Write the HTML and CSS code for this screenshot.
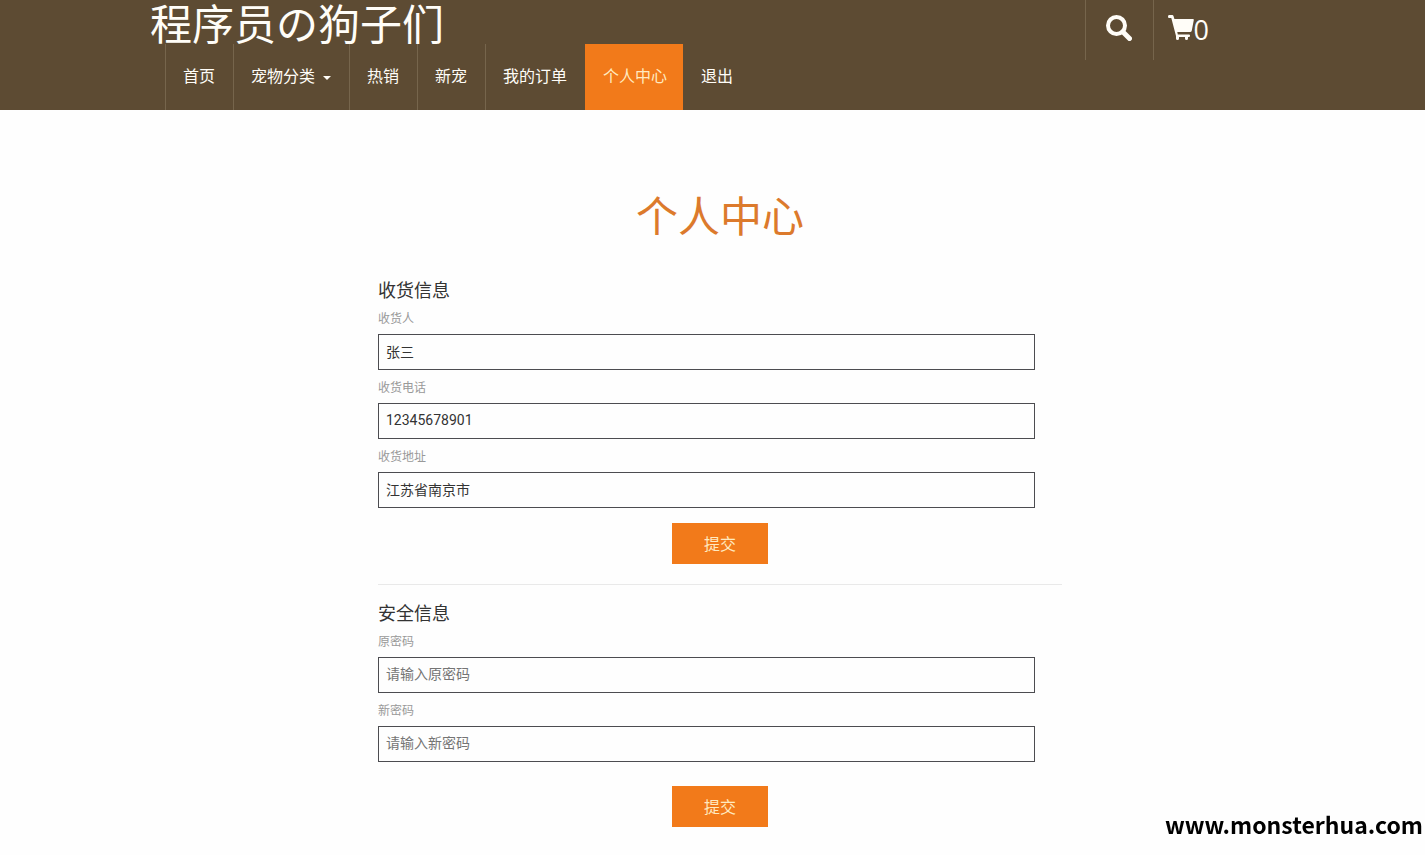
FILE: index.html
```html
<!DOCTYPE html>
<html lang="zh-CN">
<head>
<meta charset="utf-8">
<meta name="viewport" content="width=device-width, initial-scale=1">
<title>个人中心</title>
<link rel="stylesheet" href="styles.css">
</head>
<body>
<header class="header">
  <div class="container header-row">
    <div class="header-main">
      <a class="brand" href="#">程序员の狗子们</a>
      <nav class="nav">
        <a href="#">首页</a>
        <a href="#">宠物分类<span class="caret"></span></a>
        <a href="#">热销</a>
        <a href="#">新宠</a>
        <a href="#">我的订单</a>
        <a class="active" href="#">个人中心</a>
        <a class="plain" href="#">退出</a>
      </nav>
    </div>
    <div class="tools">
      <button class="search" type="button" aria-label="搜索">
        <svg width="26" height="26" viewBox="0 0 26 26"><circle cx="10.500" cy="10.500" r="8.500" fill="none" stroke="#fffdf8" stroke-width="4"/><path d="M17 17l6.500 6.500" stroke="#fffdf8" stroke-width="5" stroke-linecap="round"/></svg>
      </button>
      <a class="cart" href="#" aria-label="购物车">
        <svg width="26" height="26" viewBox="0 0 26 26" fill="#fffdf8"><path d="M1 0h3.200q1 0 1.300 1l.9 3H25q1 0 .8 1l-2 10.500q-.3 1.500-1.800 1.500H9.300l.5 2.500H21q1 0 1 1v.5q0 1-1 1h-1v1.500q0 1.500-1.500 1.500T17 23.500V22h-6v1.500Q11 25 9.500 25T8 23.500V21L3.300 3H1Q0 3 0 1.500T1 0z"/></svg><span>0</span>
      </a>
    </div>
  </div>
</header>
<main class="container">
  <h1>个人中心</h1>
  <div class="panel">
    <form class="section">
      <h2>收货信息</h2>
      <label for="name">收货人</label>
      <input id="name" type="text" value="张三">
      <label for="phone">收货电话</label>
      <input id="phone" type="text" value="12345678901">
      <label for="address">收货地址</label>
      <input id="address" type="text" value="江苏省南京市">
      <button class="submit" type="button">提交</button>
    </form>
    <form class="section security">
      <h2>安全信息</h2>
      <label for="old">原密码</label>
      <input id="old" type="password" placeholder="请输入原密码">
      <label for="new">新密码</label>
      <input id="new" type="password" placeholder="请输入新密码">
      <button class="submit" type="button">提交</button>
    </form>
  </div>
</main>
<div class="watermark">www.monsterhua.com</div>
</body>
</html>
```
FILE: styles.css
```css
* { box-sizing: border-box; }

body {
  margin: 0;
  background: #fefefe;
  color: #333;
  font-family: Roboto, "Noto Sans CJK SC", sans-serif;
  font-size: 14px;
}

a { color: inherit; text-decoration: none; }

button { border: 0; padding: 0; font: inherit; cursor: pointer; }

.header,
main { padding-left: 15px; }

.header { background: #5d4b33; color: #fffdf8; }

.container { width: 100%; max-width: 1140px; margin: 0 auto; }

main.container { max-width: 1155px; }

.header-row { display: flex; justify-content: space-between; align-items: flex-start; }

.brand {
  display: block;
  margin-bottom: -8px;
  font-size: 42px;
  line-height: 52px;
  white-space: nowrap;
}

.nav { display: flex; margin-left: 15px; }

.nav a {
  padding: 0 18px 0 17px;
  border-left: 1px solid #76654c;
  font-size: 16px;
  line-height: 66px;
  white-space: nowrap;
}

.nav .active { padding-right: 16px; background: #f27a1a; border-color: #f27a1a; color: #ffeac0; }

.nav .plain { border-color: transparent; }

.caret {
  display: inline-block;
  margin-left: 8px;
  border: 4px solid transparent;
  border-top-color: #fffdf8;
  border-bottom: 0;
  vertical-align: middle;
}

.tools { display: flex; margin-right: 81px; }

.search,
.cart {
  display: flex;
  align-items: center;
  height: 60px;
  padding-bottom: 4px;
  border-left: 1px solid #76654c;
}

.search { justify-content: center; width: 68px; background: none; }

.cart { padding-left: 14px; }

.cart span { padding-top: 4px; font: 27px/32px "Open Sans", "Noto Sans", sans-serif; }

h1,
h2 { margin: 0; font-weight: 400; }

h1 {
  padding-top: 78px;
  color: #dc7a2c;
  font-size: 42px;
  line-height: 60px;
  text-align: center;
}

.panel { width: 60%; margin: 0 auto; padding-top: 28px; }

.section { display: flex; flex-direction: column; }

h2 { padding-top: 1px; font-size: 18px; line-height: 28px; }

.section label {
  padding: 3px 0 4px;
  color: #999;
  font-size: 12px;
  line-height: 22px;
}

.section input {
  width: 96%;
  height: 36px;
  margin-bottom: 4px;
  padding: 0 7px 2px;
  border: 1px solid #4c4c50;
  border-radius: 0;
  background: #fefefe;
  color: #333;
  font: inherit;
}

.section input::placeholder { color: #757575; opacity: 1; }

.submit {
  align-self: center;
  width: 96px;
  height: 41px;
  margin-top: 11px;
  padding-bottom: 2px;
  background: #f27a1a;
  color: #ffeac0;
  font-size: 16px;
}

.security { margin-top: 20px; padding-top: 14px; border-top: 1px solid #e9e9e9; }

.security .submit { margin-top: 20px; }

.watermark {
  position: fixed;
  right: 2px;
  bottom: 13px;
  color: #000;
  font: 700 23px/36px "Noto Sans CJK SC", sans-serif;
}
```
